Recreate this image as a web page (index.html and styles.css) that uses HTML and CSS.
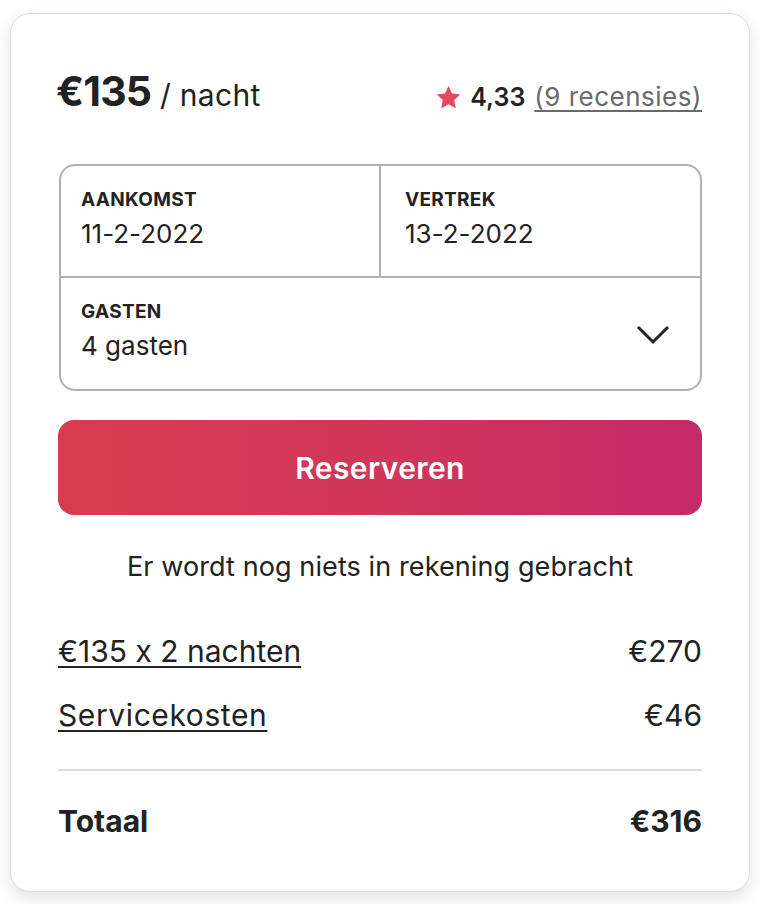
FILE: index.html
```html
<!DOCTYPE html>
<html lang="nl">
<head>
<meta charset="utf-8">
<title>Reserveren</title>
<link rel="stylesheet" href="styles.css">
</head>
<body>
<div class="card">
  <div class="header">
    <div class="price"><span class="amount">€135</span><span class="per"> / nacht</span></div>
    <div class="rating">
      <svg class="star" viewBox="0 0 32 32" width="25" height="25" aria-hidden="true"><path d="M16 1.2l4.5 9.6 10.5 1.3-7.7 7.2 2 10.4L16 24.6l-9.3 5.1 2-10.4L1 12.1l10.5-1.3z" fill="#e8475f"/></svg>
      <span class="score">4,33</span>
      <span class="reviews">(9 recensies)</span>
    </div>
  </div>

  <div class="picker">
    <div class="dates">
      <div class="field">
        <div class="label">AANKOMST</div>
        <div class="value">11-2-2022</div>
      </div>
      <div class="field field-right">
        <div class="label">VERTREK</div>
        <div class="value">13-2-2022</div>
      </div>
    </div>
    <div class="field guests">
      <div>
        <div class="label">GASTEN</div>
        <div class="value">4 gasten</div>
      </div>
      <svg class="chevron" viewBox="0 0 34 20" width="34" height="20" aria-hidden="true"><path d="M2 2l15 15L32 2" fill="none" stroke="#222" stroke-width="3"/></svg>
    </div>
  </div>

  <button class="reserve">Reserveren</button>

  <p class="note">Er wordt nog niets in rekening gebracht</p>

  <div class="line"><span class="link">€135 x 2 nachten</span><span>€270</span></div>
  <div class="line line-2"><span class="link">Servicekosten</span><span>€46</span></div>
  <div class="divider"></div>
  <div class="line total"><span>Totaal</span><span>€316</span></div>
</div>
</body>
</html>
```

FILE: styles.css
```css
* { box-sizing: border-box; }
html, body { margin: 0; padding: 0; background: #fff; }
body {
  font-family: Inter, "Noto Sans", sans-serif;
  font-feature-settings: "calt" 0;
  color: #222;
  padding: 13px 10px;
}
.card {
  width: 740px;
  border: 1px solid #dddddd;
  border-radius: 20px;
  box-shadow: 0 6px 16px rgba(0,0,0,0.12);
  padding: 52px 47px 52px;
  background: #fff;
}
.header {
  display: flex;
  justify-content: space-between;
  align-items: baseline;
  height: 50px;
}
.price { line-height: 50px; }
.amount { font-size: 41px; font-weight: 700; letter-spacing: -0.8px; margin-left: -2px; }
.per { font-size: 30px; font-weight: 400; letter-spacing: 0.3px; }
.rating {
  display: flex;
  align-items: baseline;
  font-size: 25px;
  line-height: 30px;
}
.star { align-self: center; margin-right: 9px; }
.score { font-weight: 600; margin-right: 9px; }
.reviews {
  color: #6a6a6a;
  font-size: 26px;
  letter-spacing: 0.5px;
  text-decoration: underline;
  text-underline-offset: 4px;
  text-decoration-thickness: 2px;
}
.picker {
  margin-top: 48px;
  border: 2px solid #b0b0b0;
  border-radius: 16px;
  margin-left: 1px;
}
.dates {
  display: grid;
  grid-template-columns: 318px 1fr;
  border-bottom: 2px solid #b0b0b0;
}
.field { padding: 23px 20px 0; height: 110px; }
.field-right { border-left: 2px solid #b0b0b0; padding-left: 24px; }
.guests {
  height: 111px;
  display: flex;
  align-items: center;
  justify-content: space-between;
  padding-top: 0;
  padding-right: 30px;
}
.guests > div { margin-top: -5px; }
.label {
  font-size: 19px;
  font-weight: 700;
  line-height: 22px;
  letter-spacing: 0.3px;
}
.value {
  font-size: 26px;
  line-height: 32px;
  margin-top: 7px;
}
.chevron { margin-top: 2px; }
.reserve {
  display: block;
  width: 100%;
  height: 95px;
  margin-top: 29px;
  border: 0;
  border-radius: 16px;
  background: linear-gradient(90deg, #d73b4f 0%, #d1365a 50%, #c32a67 100%);
  color: #fff;
  font-family: Inter, "Noto Sans", sans-serif;
  font-size: 30px;
  font-weight: 600;
  letter-spacing: 0.4px;
}
.note {
  margin: 36px 0 0;
  text-align: center;
  font-size: 27px;
  line-height: 32px;
  letter-spacing: 0.1px;
}
.line {
  display: flex;
  justify-content: space-between;
  font-size: 30px;
  line-height: 36px;
  margin-top: 50px;
}
.line-2 { margin-top: 28px; }
.link {
  text-decoration: underline;
  text-underline-offset: 4px;
  text-decoration-thickness: 2px;
}
.line-2 .link { letter-spacing: 0.6px; }
.divider {
  height: 2px;
  background: #dddddd;
  margin-top: 36px;
}
.total { font-weight: 700; margin-top: 32px; }
```
